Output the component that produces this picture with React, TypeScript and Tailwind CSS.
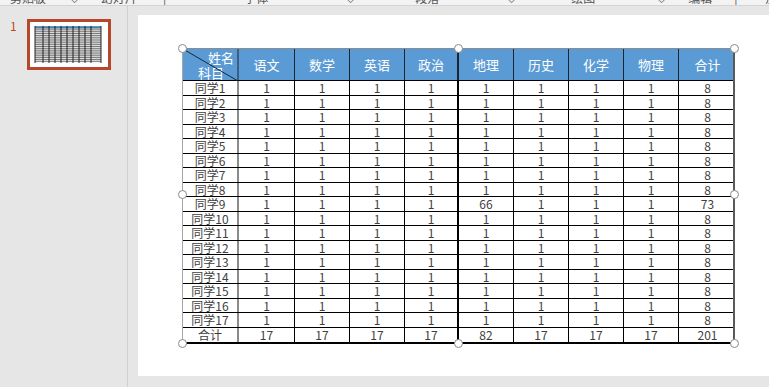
const FONT = "font-['Noto_Sans_CJK_SC','Microsoft_YaHei',sans-serif]";

const subjects = ["语文", "数学", "英语", "政治", "地理", "历史", "化学", "物理", "合计"];
const colW = ["w-[56px]", "w-[56px]", "w-[55px]", "w-[55px]", "w-[54px]", "w-[55px]", "w-[55px]", "w-[55px]", "w-[55px]", "w-[57px]"];

const rows: { name: string; values: number[] }[] = [
  ...Array.from({ length: 17 }, (_, i) => ({
    name: `同学${i + 1}`,
    values: i === 8 ? [1, 1, 1, 1, 66, 1, 1, 1, 73] : [1, 1, 1, 1, 1, 1, 1, 1, 8],
  })),
  { name: "合计", values: [17, 17, 17, 17, 82, 17, 17, 17, 201] },
];

function Ribbon() {
  const items: [string, string][] = [
    ["剪贴板", "ml-[10px]"],
    ["⌵", "ml-[24px]"],
    ["幻灯片", "ml-[22px]"],
    ["|", "ml-[26px]"],
    ["字体", "ml-[78px]"],
    ["⌵", "ml-[78px]"],
    ["段落", "ml-[60px]"],
    ["⌵", "ml-[68px]"],
    ["绘图", "ml-[55px]"],
    ["⌵", "ml-[62px]"],
    ["编辑", "ml-[22px]"],
    ["|", "ml-[22px]"],
    ["加载", "ml-[28px]"],
  ];
  return (
    <div className="h-[6px] bg-[#f3f3f3] border-b border-[#d4d4d4] overflow-hidden">
      <div className="flex -mt-[9px] text-[12px] leading-[14px] text-[#555]">
        {items.map(([t, m], i) => (
          <span key={i} className={`${m} shrink-0`}>
            {t}
          </span>
        ))}
      </div>
    </div>
  );
}

function Thumbnail() {
  const cols = [0, 8, 14, 20, 26, 32, 38, 44, 50, 56, 66];
  const rowsY = Array.from({ length: 19 }, (_, i) => 6 + i * 1.85);
  return (
    <div className="w-[84px] h-[51px] border-[3px] border-[#b7472a] bg-white">
      <svg width="78" height="45" viewBox="0 0 78 45">
        <rect x="5" y="4" width="66" height="2.5" fill="#5b9bd5" />
        <rect x="5" y="6.5" width="66" height="34" fill="#eeeeee" />
        {rowsY.map((y, i) => (
          <line key={i} x1="5" x2="71" y1={y} y2={y} stroke="#444" strokeWidth="0.7" />
        ))}
        {cols.map((x, i) => (
          <line key={i} x1={5 + x} x2={5 + x} y1="4" y2="41" stroke="#111" strokeWidth="0.9" />
        ))}
      </svg>
    </div>
  );
}

function Handle({ className }: { className: string }) {
  return (
    <span
      className={`absolute w-[9px] h-[9px] rounded-full bg-white border border-[#8a8a8a] ${className}`}
    />
  );
}

function ScoreTable() {
  return (
    <div className="relative w-[553px]">
      <div className="border-t border-[#8c8c8c] border-l border-l-[#a6a6a6] border-r-2 border-r-[#5a5a5a] border-b-2 border-b-black">
        <div className="flex h-[32px] bg-[#5b9bd5] text-white text-[13px] border-b border-black">
          <div className={`${colW[0]} relative shrink-0 border-r-2 border-[#3e5f80] flex flex-col leading-[15px]`}>
            <svg className="absolute inset-0" width="55" height="32" viewBox="0 0 55 32">
              <line x1="0" y1="0" x2="55" y2="32" stroke="#1b2633" strokeWidth="1" />
            </svg>
            <span className="self-end pr-[3px] pt-[1px]">姓名</span>
            <span className="pl-[15px]">科目</span>
          </div>
          {subjects.map((s, i) => (
            <div
              key={s}
              className={`${colW[i + 1]} shrink-0 flex items-center justify-center ${
                i < subjects.length - 1 ? (i === 3 ? "border-r-2" : "border-r") : ""
              } border-[#1b2633]`}
            >
              {s}
            </div>
          ))}
        </div>
        {rows.map((r, ri) => (
          <div
            key={r.name}
            className={`flex h-[14.5px] text-[12px] leading-[13px] text-[#404040] ${
              ri < rows.length - 1 ? "border-b border-black" : ""
            }`}
          >
            <div className={`${colW[0]} shrink-0 border-r-2 border-[#8a8a8a] flex items-center justify-center`}>
              {r.name}
            </div>
            {r.values.map((v, i) => (
              <div
                key={i}
                className={`${colW[i + 1]} shrink-0 flex items-center justify-center ${
                  i < r.values.length - 1 ? (i === 3 ? "border-r-2" : "border-r") : ""
                } border-black`}
              >
                {v}
              </div>
            ))}
          </div>
        ))}
      </div>
      <Handle className="-left-[4px] -top-[4px]" />
      <Handle className="left-[272px] -top-[4px]" />
      <Handle className="-right-[4px] -top-[4px]" />
      <Handle className="-left-[4px] top-[142px]" />
      <Handle className="-right-[4px] top-[142px]" />
      <Handle className="-left-[4px] -bottom-[4px]" />
      <Handle className="left-[272px] -bottom-[4px]" />
      <Handle className="-right-[4px] -bottom-[4px]" />
    </div>
  );
}

export default function App() {
  return (
    <div className={`w-[769px] h-[387px] bg-[#e6e6e6] overflow-hidden flex flex-col ${FONT}`}>
      <Ribbon />
      <div className="flex flex-1 min-h-0">
        <aside className="w-[128px] shrink-0 border-r border-[#d0d0d0] flex pt-[13px] pl-[10px]">
          <span className="w-[17px] text-[12px] leading-[14px] text-[#c4471f]">1</span>
          <Thumbnail />
        </aside>
        <main className="flex-1 pl-[10px] pt-[9px] overflow-hidden">
          <div className="w-[640px] h-[361px] bg-white pl-[44px] pt-[33px]">
            <ScoreTable />
          </div>
        </main>
      </div>
    </div>
  );
}
